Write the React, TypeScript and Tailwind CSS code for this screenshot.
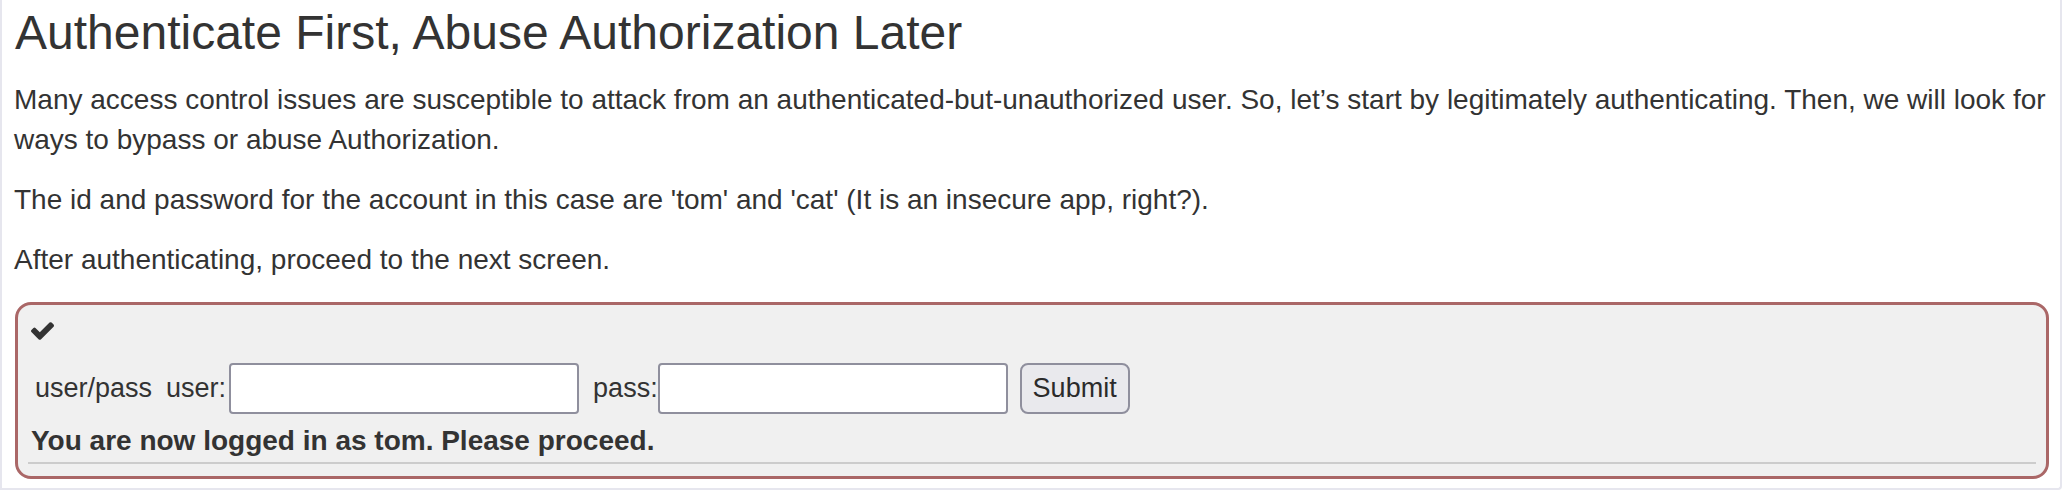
import React from "react";

function Check() {
  return (
    <svg width="23" height="18" viewBox="121 334 1550 1188" className="block" fill="#333333">
      <path d="M1671 566q0 40-28 68l-724 724-136 136q-28 28-68 28t-68-28l-136-136-362-362q-28-28-28-68t28-68l136-136q28-28 68-28t68 28l294 295 656-657q28-28 68-28t68 28l136 136q28 28 28 68z" />
    </svg>
  );
}

export default function App() {
  return (
    <div
      className="w-[2062px] h-[490px] bg-white text-[#333333] overflow-hidden"
      style={{ fontFamily: '"Liberation Sans", Arial, sans-serif' }}
    >
      <div className="h-[490px] border-l-2 border-r-2 border-b-2 border-[#e6e6ee] rounded-br-[4px] pl-[12px] pr-[11px] pt-[7px]">
        <h3 className="text-[48px] leading-[1.1] font-normal mb-[20px] ml-[1px]">
          Authenticate First, Abuse Authorization Later
        </h3>
        <p className="text-[28px] leading-[40px] mb-[20px]">
          Many access control issues are susceptible to attack from an authenticated-but-unauthorized user. So, let’s start by legitimately authenticating. Then, we will look for ways to bypass or abuse Authorization.
        </p>
        <p className="text-[28px] leading-[40px] mb-[20px]">
          The id and password for the account in this case are 'tom' and 'cat' (It is an insecure app, right?).
        </p>
        <p className="text-[28px] leading-[40px] mb-[22px]">
          After authenticating, proceed to the next screen.
        </p>
        <div className="ml-[1px] border-[3px] border-[#aa6767] rounded-[16px] bg-[#f0f0f0] pb-[12px]">
          <div className="pl-[13px] pt-[17px]">
            <Check />
          </div>
          <div className="mt-[23px] flex items-center h-[51px] pl-[17px] text-[27px]">
            <span>user/pass</span>
            <span className="ml-[14px] mr-[3px]">user:</span>
            <input
              type="text"
              className="w-[350px] h-[51px] bg-white border-2 border-[#8f8f9d] rounded-[4px] outline-none"
            />
            <span className="ml-[14px]">pass:</span>
            <input
              type="password"
              className="w-[350px] h-[51px] bg-white border-2 border-[#8f8f9d] rounded-[4px] outline-none"
            />
            <button className="ml-[12px] w-[110px] h-[51px] bg-[#e9e9ed] border-2 border-[#8f8f9d] rounded-[8px] text-[27px] text-[#2b2b2b]">
              Submit
            </button>
          </div>
          <div className="pt-[10px] pl-[13px] text-[28px] leading-[34px] font-bold">
            You are now logged in as tom. Please proceed.
          </div>
          <div className="mt-[4px] mx-[10px] h-[2px] bg-[#cccccc]" />
        </div>
      </div>
    </div>
  );
}
